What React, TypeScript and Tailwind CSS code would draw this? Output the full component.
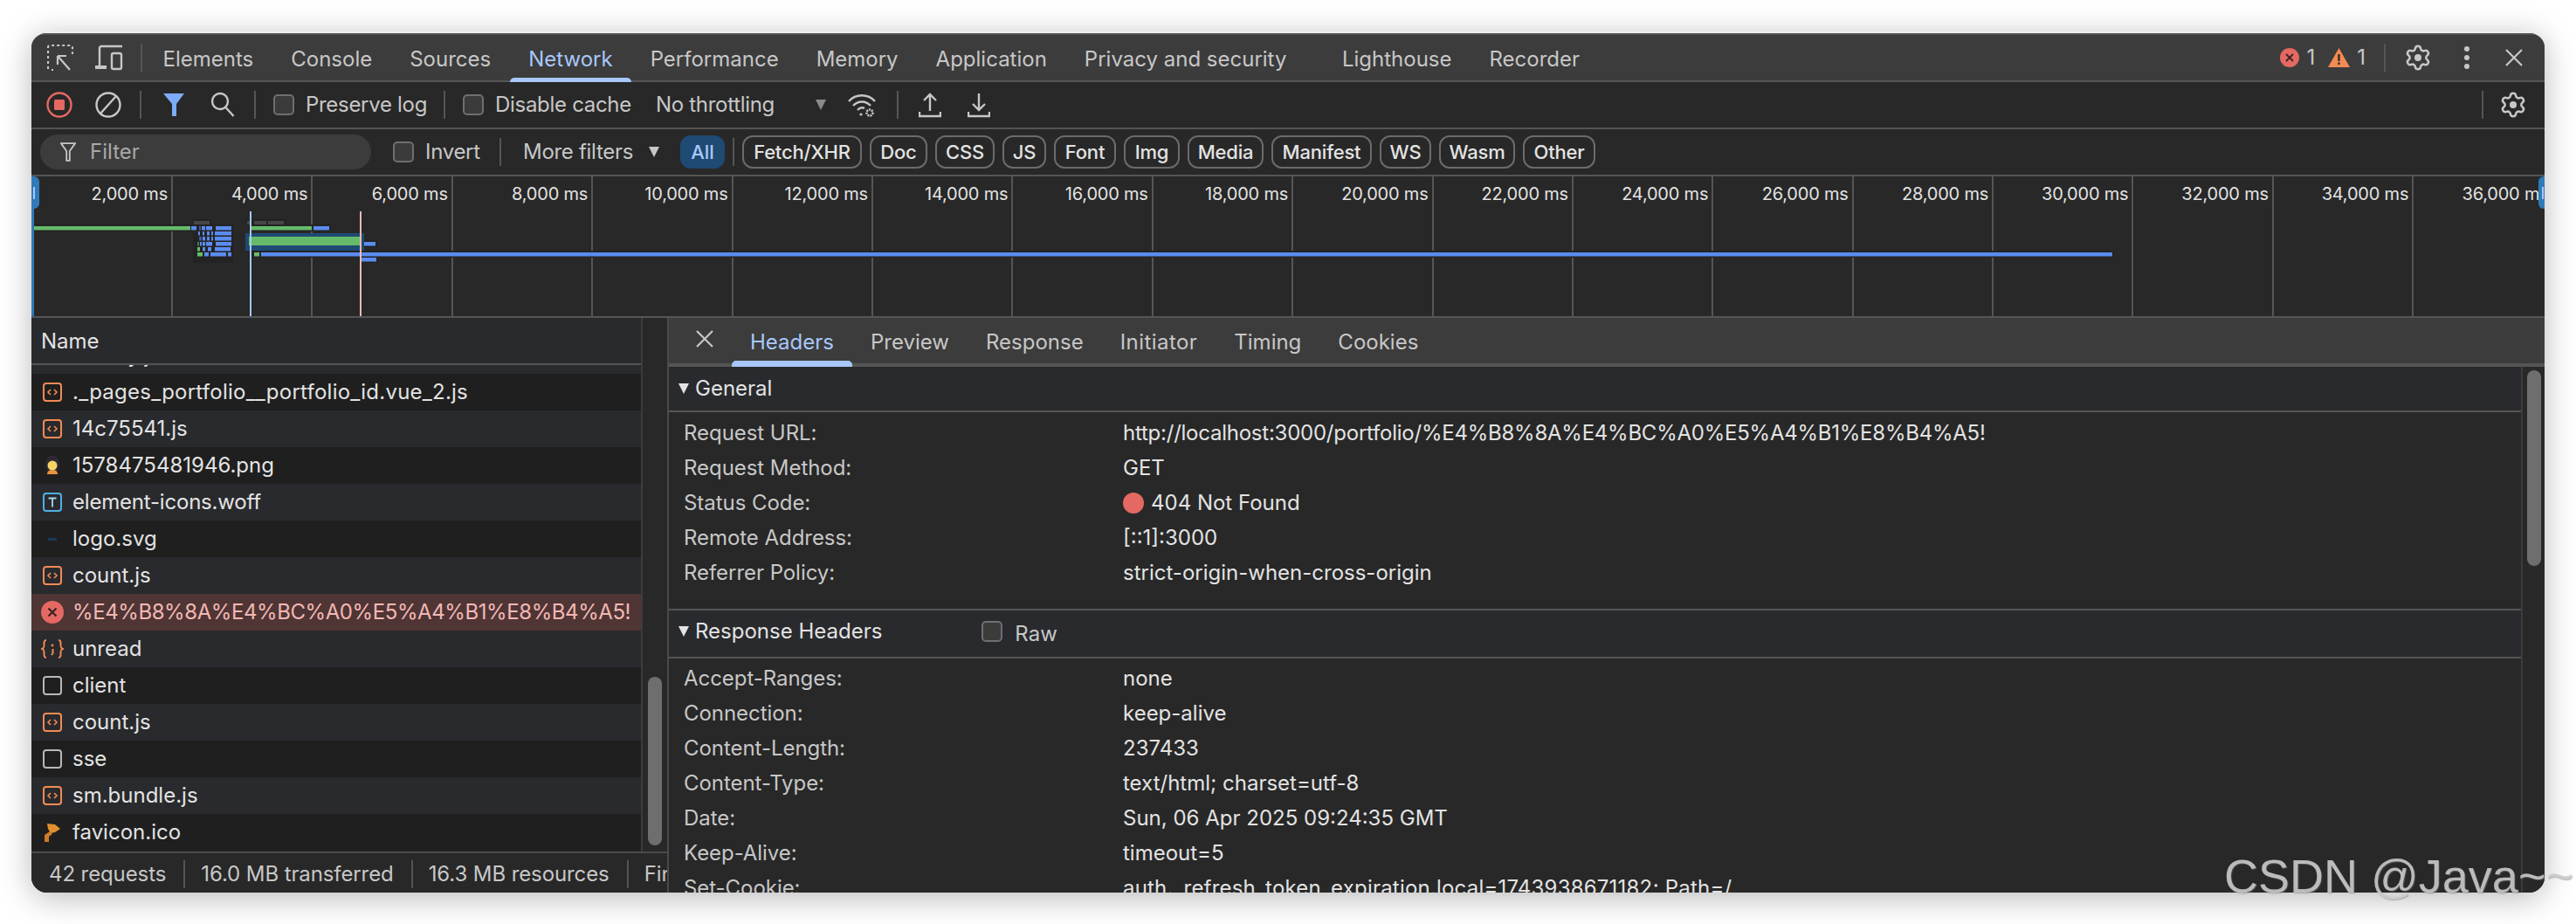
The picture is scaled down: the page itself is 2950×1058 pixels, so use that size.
import type { ReactNode } from 'react';

const FONT = "font-['Inter',sans-serif]";

const TOP_TABS = ['Elements', 'Console', 'Sources', 'Network', 'Performance', 'Memory', 'Application', 'Privacy and security'];
const DETAIL_TABS = ['Headers', 'Preview', 'Response', 'Initiator', 'Timing', 'Cookies'];
const CHIPS = [
  { label: 'Fetch/XHR', className: 'w-[137px]' },
  { label: 'Doc', className: 'w-[66px]' },
  { label: 'CSS', className: 'w-[68px]' },
  { label: 'JS', className: 'w-[50px]' },
  { label: 'Font', className: 'w-[71px]' },
  { label: 'Img', className: 'w-[64px]' },
  { label: 'Media', className: 'w-[87px]' },
  { label: 'Manifest', className: 'w-[115px]' },
  { label: 'WS', className: 'w-[59px]' },
  { label: 'Wasm', className: 'w-[87px]' },
  { label: 'Other', className: 'w-[83px]' },
];
const TICKS = ['2,000 ms', '4,000 ms', '6,000 ms', '8,000 ms', '10,000 ms', '12,000 ms', '14,000 ms', '16,000 ms', '18,000 ms', '20,000 ms', '22,000 ms', '24,000 ms', '26,000 ms', '28,000 ms', '30,000 ms', '32,000 ms', '34,000 ms', '36,000 ms'];

type Kind = 'js' | 'png' | 'font' | 'svg' | 'error' | 'json' | 'doc' | 'ico';

const REQUESTS: { name: string; kind: Kind; tracking?: string }[] = [
  { name: '._entry.js', kind: 'js' },
  { name: '._pages_portfolio__portfolio_id.vue_2.js', kind: 'js', tracking: 'tracking-[0.24px]' },
  { name: '14c75541.js', kind: 'js' },
  { name: '1578475481946.png', kind: 'png' },
  { name: 'element-icons.woff', kind: 'font', tracking: 'tracking-[-0.2px]' },
  { name: 'logo.svg', kind: 'svg' },
  { name: 'count.js', kind: 'js' },
  { name: '%E4%B8%8A%E4%BC%A0%E5%A4%B1%E8%B4%A5!', kind: 'error', tracking: 'tracking-[-0.42px]' },
  { name: 'unread', kind: 'json' },
  { name: 'client', kind: 'doc' },
  { name: 'count.js', kind: 'js' },
  { name: 'sse', kind: 'doc' },
  { name: 'sm.bundle.js', kind: 'js' },
  { name: 'favicon.ico', kind: 'ico' },
];

const RESPONSE_HEADERS = [
  ['Accept-Ranges:', 'none'],
  ['Connection:', 'keep-alive'],
  ['Content-Length:', '237433'],
  ['Content-Type:', 'text/html; charset=utf-8'],
  ['Date:', 'Sun, 06 Apr 2025 09:24:35 GMT'],
  ['Keep-Alive:', 'timeout=5'],
];

// overview bars, in page pixels: [x1, x2, y, colour]
const BLUE = '#5b8cf0';
const DIM = '#3f5c9c';
const GREEN = '#66bb6a';
const DIMGREEN = '#3f7d4f';
const OVERVIEW: [number, number, number, string][] = [
  [39, 218, 259, GREEN],
  [219, 225, 259, BLUE],
  [228, 230, 259, DIM],
  [231, 235, 259, BLUE],
  [236, 243, 259, BLUE],
  [247, 265, 259, BLUE],
  [227, 229, 265, BLUE],
  [232, 234, 265, BLUE],
  [237, 240, 265, BLUE],
  [242, 244, 265, BLUE],
  [246, 265, 265, BLUE],
  [228, 231, 271, DIM],
  [232, 235, 271, BLUE],
  [237, 240, 271, BLUE],
  [242, 244, 271, BLUE],
  [246, 265, 271, BLUE],
  [226, 228, 277, DIMGREEN],
  [229, 231, 277, BLUE],
  [232, 235, 277, BLUE],
  [236, 243, 277, BLUE],
  [247, 265, 277, BLUE],
  [226, 229, 283, GREEN],
  [232, 235, 283, BLUE],
  [238, 242, 283, BLUE],
  [246, 264, 283, BLUE],
  [226, 232, 289, GREEN],
  [234, 239, 289, BLUE],
  [241, 259, 289, BLUE],
  [261, 265, 289, BLUE],
  [287, 357, 259, GREEN],
  [359, 377, 259, BLUE],
  [417, 430, 277, BLUE],
  [291, 297, 289, GREEN],
  [299, 2419, 289, BLUE],
  [413, 431, 295, BLUE],
];

const Divider = ({ className = '' }: { className?: string }) => (
  <div className={`w-[2px] h-8 bg-[#555555] shrink-0 ${className}`} />
);

const Checkbox = ({ className = '' }: { className?: string }) => (
  <div className={`w-6 h-6 shrink-0 rounded-[5px] border-2 border-[#6f6f6f] bg-[#3b3b3b] ${className}`} />
);

const Caret = ({ className = '' }: { className?: string }) => (
  <svg viewBox="0 0 12 12" className={`w-3 h-3 shrink-0 ${className}`}>
    <path d="M0 0h12L6 12z" fill="currentColor" />
  </svg>
);

const GearIcon = ({ className = '' }: { className?: string }) => (
  <svg viewBox="0 0 24 24" fill="none" stroke="#c7c7c7" strokeWidth="1.9" className={`w-[32px] h-[32px] shrink-0 ${className}`}>
    <path d="M9.671 4.136a2.34 2.34 0 0 1 4.659 0 2.34 2.34 0 0 0 3.319 1.915 2.34 2.34 0 0 1 2.33 4.033 2.34 2.34 0 0 0 0 3.831 2.34 2.34 0 0 1-2.33 4.033 2.34 2.34 0 0 0-3.319 1.915 2.34 2.34 0 0 1-4.659 0 2.34 2.34 0 0 0-3.32-1.915 2.34 2.34 0 0 1-2.33-4.033 2.34 2.34 0 0 0 0-3.831A2.34 2.34 0 0 1 6.35 6.051a2.34 2.34 0 0 0 3.319-1.915" />
    <circle cx="12" cy="12" r="3" fill="#c7c7c7" stroke="none" />
  </svg>
);

const CloseIcon = ({ className = '' }: { className?: string }) => (
  <svg viewBox="0 0 22 22" fill="none" stroke="#c7c7c7" strokeWidth="2.2" className={`w-[22px] h-[22px] shrink-0 ${className}`}>
    <path d="M2 2l18 18M20 2L2 20" />
  </svg>
);

const FileIcon = ({ kind }: { kind: Kind }) => {
  if (kind === 'js') {
    return (
      <svg viewBox="0 0 22 22" fill="none" className="w-[22px] h-[22px]">
        <rect x="1" y="1" width="20" height="20" rx="3" stroke="#f28b54" strokeWidth="2" />
        <path d="M9 8l-3 3 3 3M13 8l3 3-3 3" stroke="#f28b54" strokeWidth="1.6" />
      </svg>
    );
  }
  if (kind === 'font') {
    return (
      <svg viewBox="0 0 22 22" fill="none" className="w-[22px] h-[22px]">
        <rect x="1" y="1" width="20" height="20" rx="3" stroke="#4fb0e3" strokeWidth="2" />
        <path d="M6.5 6.5h9M11 6.5v10" stroke="#a8d8f0" strokeWidth="1.8" />
      </svg>
    );
  }
  if (kind === 'doc') {
    return (
      <svg viewBox="0 0 22 22" fill="none" className="w-[22px] h-[22px]">
        <rect x="1" y="1" width="20" height="20" rx="3" stroke="#b8b8b8" strokeWidth="2" />
      </svg>
    );
  }
  if (kind === 'json') {
    return (
      <svg viewBox="0 0 26 22" fill="none" className="w-[26px] h-[22px] -mx-[2px]">
        <path d="M6 1C3 1 3.5 4 3.5 7S3 10 1 11c2 1 2.5 1 2.5 4S3 21 6 21M20 1c3 0 2.5 3 2.5 6s.5 3 2.5 4c-2 1-2.5 1-2.5 4s.5 6-2.5 6" stroke="#f28b54" strokeWidth="2" />
        <circle cx="13" cy="7" r="1.4" fill="#f28b54" />
        <path d="M13.5 11v5l-1.5 2" stroke="#f28b54" strokeWidth="2" />
      </svg>
    );
  }
  if (kind === 'png') {
    return (
      <svg viewBox="0 0 22 22" className="w-[22px] h-[22px]">
        <ellipse cx="11" cy="10" rx="8" ry="11" fill="#2d2833" />
        <circle cx="11" cy="11" r="5.5" fill="#f6d365" />
        <path d="M5 21c0-4 3-5 6-5s6 1 6 5z" fill="#e8943c" />
      </svg>
    );
  }
  if (kind === 'svg') {
    return (
      <svg viewBox="0 0 22 22" className="w-[22px] h-[22px]">
        <rect x="6" y="10" width="10" height="3" rx="1" fill="#1d3a5c" />
      </svg>
    );
  }
  if (kind === 'ico') {
    return (
      <svg viewBox="0 0 22 22" className="w-[22px] h-[22px]">
        <path d="M5 1l9 1 6 5-6 4-5 1-3-5z" fill="#e0902f" />
        <path d="M2 14l6-4 3 3-4 3v6H2z" fill="#cf7a2a" />
      </svg>
    );
  }
  return (
    <svg viewBox="0 0 26 26" className="w-[26px] h-[26px] -mx-[2px]">
      <circle cx="13" cy="13" r="13" fill="#e46962" />
      <path d="M8.5 8.5l9 9M17.5 8.5l-9 9" stroke="#3a2220" strokeWidth="2.2" />
    </svg>
  );
};

const KeyValue = ({ label, children }: { label: string; children: ReactNode }) => (
  <div className="h-10 grid grid-cols-[503px_1fr] items-center pl-[17px] whitespace-nowrap">
    <span className="text-[#c7c7c7] tracking-[-0.05px]">{label}</span>
    <span className="text-[#e3e3e3] flex items-center">{children}</span>
  </div>
);

const MainTabs = () => (
  <div className="h-[54px] shrink-0 flex items-center bg-[#3c3c3c] border-t-2 border-[#555555]">
    <svg viewBox="0 0 30 30" fill="none" stroke="#c7c7c7" strokeWidth="2.2" className="ml-[18px] w-[30px] h-[30px] shrink-0">
      <path d="M1 28V3a2 2 0 0 1 2-2h24a2 2 0 0 1 2 2v8M7 29H5" strokeDasharray="3 3" />
      <path d="M12 13h10M12 13v10M12 13l14 16" />
    </svg>
    <svg viewBox="0 0 32 30" fill="none" stroke="#c7c7c7" strokeWidth="2.4" className="ml-[25px] w-[32px] h-[30px] shrink-0">
      <path d="M5 24V4a2 2 0 0 1 2-2h24" />
      <path d="M0 24h13v4H0z" fill="#c7c7c7" stroke="none" />
      <rect x="19" y="10" width="11" height="18" rx="2" />
    </svg>
    <Divider className="ml-[20px]" />
    <div className="ml-[2px] flex h-full">
      {TOP_TABS.map((tab) => (
        <div key={tab} className={`relative px-[21.5px] flex items-center pt-[3px] ${tab === 'Network' ? 'text-[#a8c7fa]' : 'text-[#c7c7c7]'} ${tab === 'Privacy and security' ? 'pr-[42px]' : ''}`}>
          {tab}
          {tab === 'Network' && <div className="absolute left-0 right-0 -bottom-[2px] h-[5px] rounded-t-[5px] bg-[#a8c7fa]" />}
        </div>
      ))}
      <div className="px-[21.5px] flex items-center pt-[3px] text-[#c7c7c7]">Lighthouse</div>
      <div className="px-[21.5px] flex items-center pt-[3px] text-[#c7c7c7]">Recorder</div>
    </div>
    <div className="ml-auto flex items-center pr-[24px]">
      <svg viewBox="0 0 22 22" className="w-[22px] h-[22px]">
        <circle cx="11" cy="11" r="11" fill="#e46962" />
        <path d="M7 7l8 8M15 7l-8 8" stroke="#3a2220" strokeWidth="1.8" />
      </svg>
      <span className="ml-[8px] text-[#c7c7c7]">1</span>
      <svg viewBox="0 0 25 22" className="ml-[15px] w-[25px] h-[22px]">
        <path d="M12.5 0L25 22H0z" fill="#f28b54" />
        <path d="M11.3 7h2.4v8h-2.4zM11.3 16.5h2.4V19h-2.4z" fill="#3a2a20" />
      </svg>
      <span className="ml-[8px] text-[#c7c7c7]">1</span>
      <Divider className="ml-[21px]" />
      <GearIcon className="ml-[21px]" />
      <svg viewBox="0 0 8 26" className="ml-[36px] w-2 h-[26px]" fill="#c7c7c7">
        <circle cx="4" cy="3" r="3" />
        <circle cx="4" cy="13" r="3" />
        <circle cx="4" cy="23" r="3" />
      </svg>
      <CloseIcon className="ml-[39px]" />
    </div>
  </div>
);

const NetworkToolbar = () => (
  <div className="h-[52px] shrink-0 mt-[2px] flex items-center bg-[#282828] text-[#c7c7c7] tracking-[-0.3px] whitespace-nowrap">
    <svg viewBox="0 0 30 30" fill="none" className="ml-[17px] w-[30px] h-[30px] shrink-0">
      <circle cx="15" cy="15" r="13.5" stroke="#e46962" strokeWidth="2.4" />
      <rect x="9" y="9" width="12" height="12" rx="1.5" fill="#e46962" />
    </svg>
    <svg viewBox="0 0 30 30" fill="none" stroke="#c7c7c7" strokeWidth="2.4" className="ml-[26px] w-[30px] h-[30px] shrink-0">
      <circle cx="15" cy="15" r="13.5" />
      <path d="M6 25L24 5" />
    </svg>
    <Divider className="ml-[21px]" />
    <svg viewBox="0 0 30 30" className="ml-[22px] w-[30px] h-[30px] shrink-0">
      <path d="M3 2h24L18 14v14h-5V14z" fill="#7cacf8" />
    </svg>
    <svg viewBox="0 0 30 30" fill="none" stroke="#c7c7c7" strokeWidth="2.4" className="ml-[26px] w-[30px] h-[30px] shrink-0">
      <circle cx="12" cy="11" r="9" />
      <path d="M18.5 18l9 10" />
    </svg>
    <Divider className="ml-[21px]" />
    <Checkbox className="ml-[20px]" />
    <span className="ml-[13px] w-[139px]">Preserve log</span>
    <Divider className="ml-[19px]" />
    <Checkbox className="ml-[20px]" />
    <span className="ml-[13px] w-[157px]">Disable cache</span>
    <span className="ml-[27px] w-[141px]">No throttling</span>
    <Caret className="ml-[42px] text-[#8a8a8a]" />
    <svg viewBox="0 0 32 30" fill="none" stroke="#c7c7c7" strokeWidth="2.4" className="ml-[25px] w-[32px] h-[30px] shrink-0">
      <path d="M1 11C9 2 23 2 31 11M6 16c6-6 14-6 20 0M11 21c3-3 6-3 8-2" />
      <circle cx="25" cy="24" r="3.5" strokeWidth="2.6" strokeDasharray="2 1" />
      <circle cx="15" cy="26" r="1.6" fill="#c7c7c7" stroke="none" />
    </svg>
    <Divider className="ml-[24px]" />
    <svg viewBox="0 0 26 30" fill="none" stroke="#c7c7c7" strokeWidth="2.4" className="ml-[23px] w-[26px] h-[30px] shrink-0">
      <path d="M13 22V3M6 10l7-7 7 7M1 23v5h24v-5" />
    </svg>
    <svg viewBox="0 0 26 30" fill="none" stroke="#c7c7c7" strokeWidth="2.4" className="ml-[30px] w-[26px] h-[30px] shrink-0">
      <path d="M13 2v19M6 14l7 7 7-7M1 23v5h24v-5" />
    </svg>
    <Divider className="ml-auto" />
    <GearIcon className="ml-[18px] mr-[20px]" />
  </div>
);

const FilterBar = () => (
  <div className="h-[52px] shrink-0 mt-[2px] flex items-center bg-[#282828] text-[#c7c7c7] whitespace-nowrap">
    <div className="ml-[10px] w-[379px] h-10 shrink-0 rounded-full bg-[#3c3c3c] flex items-center">
      <svg viewBox="0 0 20 26" fill="none" stroke="#c7c7c7" strokeWidth="2" className="ml-[23px] w-[18px] h-[24px]">
        <path d="M1 2h18l-7 10v12H8V12z" />
      </svg>
      <span className="ml-[16px] text-[#a8a8a8]">Filter</span>
    </div>
    <Checkbox className="ml-[25px]" />
    <span className="ml-[13px] w-[63px] tracking-[-0.3px]">Invert</span>
    <Divider className="ml-[22px]" />
    <span className="ml-[25px] w-[128px] tracking-[-0.3px]">More filters</span>
    <Caret className="ml-[16px] text-[#c7c7c7]" />
    <div className="ml-[24px] h-[38px] w-[51px] rounded-[12px] bg-[#1f4a72] text-[#a8c7fa] text-[22px] font-medium flex items-center justify-center">All</div>
    <Divider className="ml-[9px]" />
    <div className="ml-[9px] flex gap-[9px]">
      {CHIPS.map((chip) => (
        <div key={chip.label} className={`h-[38px] flex items-center justify-center rounded-[12px] border-2 border-[#6b6b6b] text-[22px] font-medium tracking-[-0.2px] text-[#e3e3e3] ${chip.className}`}>
          {chip.label}
        </div>
      ))}
    </div>
  </div>
);

const Overview = () => (
  <div className="relative h-[160px] shrink-0 mt-[2px] bg-[#282828] overflow-hidden">
    <div className="flex h-full">
      {TICKS.map((tick, i) => (
        <div key={tick} className={`${i === 0 ? 'w-[162px]' : 'w-[160.4px]'} shrink-0 h-full border-r-2 border-[#555555] text-right pr-[4px] pt-[8px] text-[20px] leading-6 tracking-[-0.2px] text-[#e3e3e3] whitespace-nowrap`}>
          {tick}
        </div>
      ))}
    </div>
    {/* waterfall drawing */}
    <svg viewBox="36 202 2878 160" className="absolute inset-0 w-full h-full">
      <rect x="36" y="257" width="186" height="8" fill="#232323" />
      <rect x="221" y="251" width="21" height="50" fill="#232323" />
      <rect x="240" y="257" width="27" height="44" fill="#232323" />
      <rect x="282" y="251" width="45" height="7" fill="#232323" />
      <rect x="285" y="257" width="94" height="8" fill="#232323" />
      <rect x="289" y="287" width="2132" height="8" fill="#232323" />
      <rect x="411" y="293" width="22" height="8" fill="#232323" />
      <rect x="415" y="275" width="17" height="8" fill="#232323" />
      <rect x="222" y="253" width="18" height="4" fill="#474747" />
      <rect x="283" y="253" width="5" height="4" fill="#474747" />
      <rect x="291" y="253" width="14" height="4" fill="#474747" />
      <rect x="307" y="253" width="18" height="4" fill="#474747" />
      <rect x="281" y="267" width="136" height="20" fill="#1f4a72" />
      <rect x="285" y="271" width="127" height="10" fill="#66bb6a" />
      {OVERVIEW.map(([x1, x2, y, color], i) => (
        <rect key={i} x={x1} y={y} width={x2 - x1} height="4.5" fill={color} />
      ))}
      <rect x="286" y="242" width="2" height="120" fill="#a8c7fa" />
      <rect x="412" y="242" width="2" height="120" fill="#f2b8b5" />
      <path d="M36 362V202h3a6 6 0 0 1 6 6v25a6 6 0 0 1-6 6v123z" fill="#2f7ab8" />
      <rect x="38" y="214" width="2" height="14" fill="#a8c7fa" />
      <path d="M2914 202h-1a6 6 0 0 0-6 6v25a6 6 0 0 0 6 6h1z" fill="#2f7ab8" />
      <rect x="2911" y="214" width="2" height="14" fill="#a8c7fa" />
    </svg>
  </div>
);

const RequestList = () => (
  <div className="w-[728px] shrink-0 flex flex-col">
    <div className="flex-1 min-h-0 flex">
      <div className="w-[700px] shrink-0 flex flex-col border-r-2 border-[#3c3c3c]">
        <div className="h-[52px] shrink-0 flex items-center pl-[11px] pt-[2px] bg-[#292a2d] text-[#e3e3e3]">Name</div>
        <div className="h-[2px] shrink-0 bg-[#555555]" />
        <div className="flex-1 min-h-0 overflow-hidden">
          {REQUESTS.map((req, i) => (
            <div
              key={`${req.name}-${i}`}
              className={`h-[42px] flex items-center pl-[13px] whitespace-nowrap ${i === 0 ? '-mt-[32px]' : ''} ${req.kind === 'error' ? 'bg-[#4f3534] text-[#f2b8b5]' : i % 2 === 0 ? 'bg-[#292a2d] text-[#e3e3e3]' : 'bg-[#1f1f1f] text-[#e3e3e3]'}`}
            >
              <div className="w-[22px] h-[26px] flex items-center justify-center shrink-0">
                <FileIcon kind={req.kind} />
              </div>
              <span className={`ml-[12px] ${req.tracking ?? ''}`}>{req.name}</span>
            </div>
          ))}
        </div>
      </div>
      <div className="flex-1 bg-[#282828]">
        <div className="mt-[411px] mx-[6px] h-[193px] rounded-full bg-[#6e6e6e]" />
      </div>
    </div>
    <div className="h-[47px] shrink-0 border-t-2 border-[#4a4a4a] flex items-center pl-[20px] pt-[2px] bg-[#282828] text-[#c7c7c7] whitespace-nowrap overflow-hidden tracking-[-0.1px]">
      <span>42 requests</span>
      <Divider className="ml-[20px]" />
      <span className="ml-[18px]">16.0 MB transferred</span>
      <Divider className="ml-[20px]" />
      <span className="ml-[18px]">16.3 MB resources</span>
      <Divider className="ml-[20px]" />
      <span className="ml-[18px]">Finish: 33.02 s</span>
    </div>
  </div>
);

const SectionHeader = ({ title, children, className = '' }: { title: string; children?: ReactNode; className?: string }) => (
  <div className={`flex items-center pl-[11px] bg-[#292a2d] text-[#e3e3e3] border-b-2 border-[#555555] ${className}`}>
    <Caret className="text-[#e3e3e3]" />
    <span className="ml-[7px]">{title}</span>
    {children}
  </div>
);

const DetailPanel = () => (
  <div className="flex-1 min-w-0 flex flex-col border-l-2 border-[#4a4a4a]">
    <div className="h-14 shrink-0 flex items-center bg-[#3c3c3c] border-b-4 border-[#555555]">
      <CloseIcon className="ml-[30px] mb-[4px] w-5 h-5" />
      <div className="ml-[20px] flex h-full">
        {DETAIL_TABS.map((tab) => (
          <div key={tab} className={`relative px-[21px] flex items-center pt-[3px] ${tab === 'Headers' ? 'text-[#a8c7fa]' : 'text-[#c7c7c7]'} ${tab === 'Initiator' ? 'tracking-[0.45px]' : ''}`}>
            {tab}
            {tab === 'Headers' && <div className="absolute left-0 right-0 -bottom-[4px] h-[7px] rounded-t-[5px] bg-[#a8c7fa]" />}
          </div>
        ))}
      </div>
    </div>
    <div className="flex-1 min-h-0 flex">
      <div className="flex-1 min-w-0 overflow-hidden">
        <SectionHeader title="General" className="h-[52px]" />
        <div className="pt-[4px] pb-[21px] border-b-2 border-[#555555]">
          <KeyValue label="Request URL:">
            <span className="tracking-[-0.24px]">http://localhost:3000/portfolio/%E4%B8%8A%E4%BC%A0%E5%A4%B1%E8%B4%A5!</span>
          </KeyValue>
          <KeyValue label="Request Method:">GET</KeyValue>
          <KeyValue label="Status Code:">
            <span className="w-6 h-6 rounded-full bg-[#e46962] mr-2" />
            404 Not Found
          </KeyValue>
          <KeyValue label="Remote Address:">[::1]:3000</KeyValue>
          <KeyValue label="Referrer Policy:">strict-origin-when-cross-origin</KeyValue>
        </div>
        <SectionHeader title="Response Headers" className="h-[55px] pb-[5px]">
          <Checkbox className="ml-[114px]" />
          <span className="ml-[14px] mt-[6px] text-[#c7c7c7]">Raw</span>
        </SectionHeader>
        <div className="pt-[3px]">
          {RESPONSE_HEADERS.map(([label, value]) => (
            <KeyValue key={label} label={label}>{value}</KeyValue>
          ))}
          <KeyValue label="Set-Cookie:">
            <span className="tracking-[0.2px]">auth._refresh_token_expiration.local=1743938671182; Path=/</span>
          </KeyValue>
        </div>
      </div>
      <div className="w-[27px] shrink-0 border-l-2 border-[#3c3c3c] bg-[#282828] pt-[4px] pl-[5px]">
        <div className="w-4 h-[224px] rounded-full bg-[#6e6e6e]" />
      </div>
    </div>
  </div>
);

const App = () => (
  <div className={`relative w-[2950px] h-[1058px] bg-white overflow-hidden pl-9 pt-9 ${FONT} text-[24px] leading-none`}>
    <div className="w-[2878px] h-[986px] rounded-[18px] overflow-hidden flex flex-col bg-[#555555] border-t-2 border-[#eeeeee] shadow-[0_6px_36px_rgba(0,0,0,0.28)]">
      <MainTabs />
      <NetworkToolbar />
      <FilterBar />
      <Overview />
      <div className="flex-1 min-h-0 mt-[2px] flex bg-[#282828]">
        <RequestList />
        <DetailPanel />
      </div>
    </div>
    {/* watermark */}
    <div className="absolute left-[2547px] top-[973px] text-[54px] leading-[60px] font-['Liberation_Sans',sans-serif] text-[#cfcfcf]/85 whitespace-nowrap [text-shadow:1px_1px_1px_rgba(120,120,120,0.5)]">CSDN @Java~~</div>
  </div>
);

export default App;
